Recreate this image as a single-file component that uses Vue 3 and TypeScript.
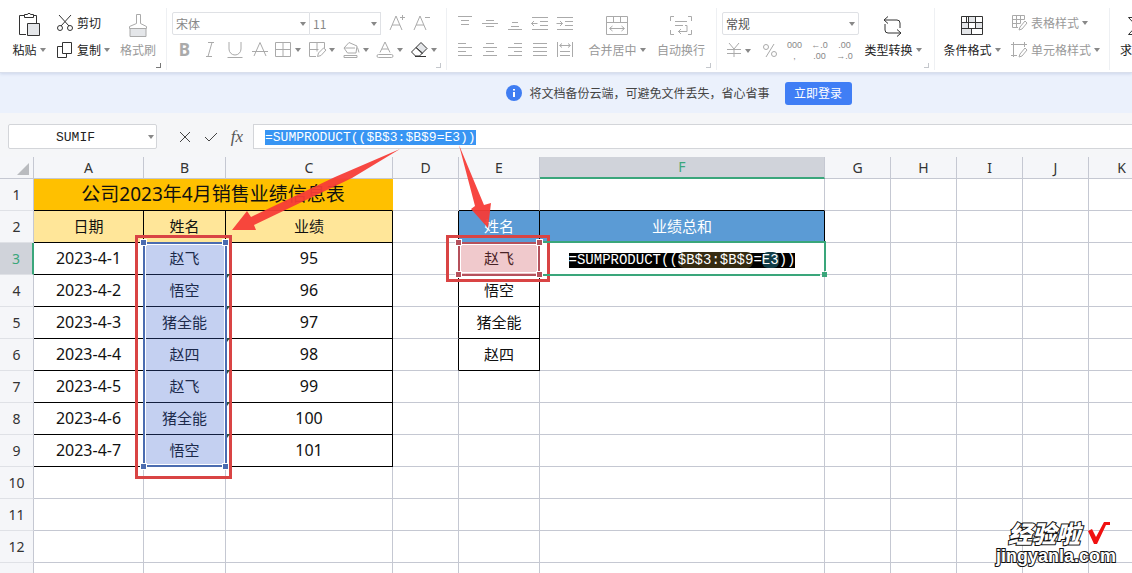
<script setup lang="ts">
import { onMounted, ref } from 'vue'

interface Tool {
  name: string
  d: string
}

interface Cell {
  col: string
  text: string
  cls: string
  span?: number
}

const formulaText = ref('=SUMPRODUCT(($B$3:$B$9=E3))')
const cellName = ref('SUMIF')
const formulaInput = ref<HTMLInputElement | null>(null)

const textTools: Tool[] = [
  { name: '下划线', d: 'M5 3v7a6 6 0 0 0 12 0V3M3.500 18.500h15' },
  { name: '删除线', d: 'M5 17L11 3.500L17 17M3 12.500h16' },
]

const dropTools: Tool[] = [
  { name: '边框', d: 'M3.500 3.500h15v14h-15zM11 3.500v14M3.500 10.500h15' },
  { name: '绘图边框', d: 'M10 17.500H3.500v-14h15v6M3.500 10.500h9M11 3.500v9M11.500 17.500l1-3.500l5-5l2.500 2l-5 5.500z' },
  { name: '填充颜色', d: 'M9 3.500l8 3.500l-1 7H7.500L4 9zM4 9h11M17.500 8.500l1.500 5M4 16.500h13v2h-13z' },
  { name: '字体颜色', d: 'M6 13.500L11 3l5 10.500M8 10h6M4.500 15.500h13a1.500 1.500 0 0 1 0 3h-13a1.500 1.500 0 0 1 0-3z' },
]

const alignTop: Tool[] = [
  { name: '顶端对齐', d: 'M4 4.500h14M7 8.500h8M7 12.500h8' },
  { name: '垂直居中', d: 'M7 8.500h8M3 11.500h16M7 14.500h8' },
  { name: '底端对齐', d: 'M8 10.500h6M7 14.500h8M4 17.500h14' },
  { name: '减少缩进', d: 'M3 5.500h16M11 9.500h8M11 13.500h8M3 17.500h16M2.500 11.500h6M5 9l-2.500 2.500l2.500 2.500' },
  { name: '增加缩进', d: 'M3 5.500h16M11 9.500h8M11 13.500h8M3 17.500h16M2.500 11.500h6M6 9l2.500 2.500l-2.500 2.500' },
]

const alignBottom: Tool[] = [
  { name: '左对齐', d: 'M4 4.500h8M4 8.500h14M4 12.500h8M4 16.500h14' },
  { name: '水平居中', d: 'M7 4.500h8M4 8.500h14M7 12.500h8M4 16.500h14' },
  { name: '右对齐', d: 'M10 4.500h8M4 8.500h14M10 12.500h8M4 16.500h14' },
  { name: '两端对齐', d: 'M4 4.500h14M4 8.500h14M4 12.500h14M4 16.500h14' },
  { name: '分散对齐', d: 'M3.500 3v15M18.500 3v15M6 6.500h10M8 4.500l-2.500 2l2.500 2M14 4.500l2.500 2l-2.500 2M6 12.500h10M6 16.500h10' },
]

const columns = ['A', 'B', 'C', 'D', 'E', 'F', 'G', 'H', 'I', 'J', 'K']
const dates = ['2023-4-1', '2023-4-2', '2023-4-3', '2023-4-4', '2023-4-5', '2023-4-6', '2023-4-7']
const names = ['赵飞', '悟空', '猪全能', '赵四', '赵飞', '猪全能', '悟空']
const scores = ['95', '96', '97', '98', '99', '100', '101']
const lookups = ['赵飞', '悟空', '猪全能', '赵四']
const labelledRows = 12

function cellsFor(row: number): Cell[] {
  const out: Cell[] = []
  for (const col of columns) {
    if (row === 1) {
      if (col === 'A') out.push({ col, text: '公司2023年4月销售业绩信息表', cls: 'title', span: 3 })
      else if (col === 'B' || col === 'C') continue
      else out.push({ col, text: '', cls: col === 'E' || col === 'F' ? 'under' : '' })
      continue
    }
    const i = row - 3
    let text = ''
    let cls = ''
    if (row === 2) {
      if (col === 'A') [text, cls] = ['日期', 'head box']
      if (col === 'B') [text, cls] = ['姓名', 'head box']
      if (col === 'C') [text, cls] = ['业绩', 'head box']
      if (col === 'D') cls = 'side'
      if (col === 'E') [text, cls] = ['姓名', 'blue box']
      if (col === 'F') [text, cls] = ['业绩总和', 'blue box']
    } else if (row <= 9) {
      if (col === 'A') [text, cls] = [dates[i], 'box num']
      if (col === 'B') [text, cls] = [names[i], 'box']
      if (col === 'C') [text, cls] = [scores[i], 'box num']
      if (row <= 6) {
        if (col === 'D') cls = 'side'
        if (col === 'E') [text, cls] = [lookups[i], 'box']
      }
      if (row === 3 && col === 'F') cls = 'editing'
    }
    out.push({ col, text, cls })
  }
  return out
}

const rows = Array.from({ length: labelledRows + 1 }, (_, i) => ({
  n: i + 1,
  label: i < labelledRows ? String(i + 1) : '',
  cells: cellsFor(i + 1),
}))

onMounted(() => {
  formulaInput.value?.focus()
  formulaInput.value?.select()
})
</script>

<template>
  <div class="app">
    <header class="ribbon">
      <section class="group clipboard">
        <button class="big dark paste">
          <span class="pic">
            <svg width="24" height="26" viewBox="0 0 24 26">
              <path d="M7 3.500H2.500v19H9M16 3.500h3.500V11" />
              <path d="M7.500 5.500v-3h3l.500-1h2l.500 1h3v3z" />
              <path class="shade" d="M10.500 11.500h12v12h-12z" />
            </svg>
          </span>
          <span class="cap">粘贴<i class="caret"></i></span>
        </button>
        <div class="stack">
          <button class="small dark">
            <svg width="18" height="18" viewBox="0 0 18 18">
              <path d="M3 1l10 11M15 1L5 12" />
              <circle cx="4" cy="14" r="2.500" /><circle cx="14" cy="14" r="2.500" />
            </svg>剪切
          </button>
          <button class="small dark">
            <svg width="18" height="18" viewBox="0 0 18 18">
              <path d="M6.500 1.500h9v11h-9zM6 5.500H1.500v11h9v-3.500" />
            </svg>复制<i class="caret"></i>
          </button>
        </div>
        <button class="big brush">
          <span class="pic">
            <svg width="24" height="26" viewBox="0 0 24 26">
              <path d="M10.500 2.500h4v9l6 3v2h-17v-2l7-3z" />
              <path class="shade" d="M4 16.500h16v8H4z" />
            </svg>
          </span>
          <span class="cap">格式刷</span>
        </button>
        <i class="corner strong"></i>
      </section>

      <section class="group font">
        <div class="line">
          <span class="pick family"><select aria-label="字体"><option>宋体</option></select><i class="caret"></i></span>
          <span class="pick size"><select aria-label="字号"><option>11</option></select><i class="caret"></i></span>
          <button class="tool grow" aria-label="增大字号">
            <svg width="22" height="22" viewBox="0 0 22 22"><path d="M3 18L9 4L15 18M5 13h8M13 5.500h5M15.500 3v5" /></svg>
          </button>
          <button class="tool" aria-label="减小字号">
            <svg width="22" height="22" viewBox="0 0 22 22"><path d="M2 18L8 4L14 18M4 13h8M13 5.500h5" /></svg>
          </button>
        </div>
        <div class="line">
          <button class="tool bold" aria-label="加粗">B</button>
          <button class="tool italic" aria-label="倾斜">
            <svg width="22" height="22" viewBox="0 0 22 22"><path d="M9 3.500h6M7 17.500h6M13 3.500l-4 14" /></svg>
          </button>
          <button v-for="t in textTools" :key="t.name" class="tool" :aria-label="t.name">
            <svg width="22" height="22" viewBox="0 0 22 22"><path :d="t.d" /></svg>
          </button>
          <button v-for="t in dropTools" :key="t.name" class="tool drop" :aria-label="t.name">
            <svg width="22" height="22" viewBox="0 0 22 22"><path :d="t.d" /></svg><i class="caret"></i>
          </button>
          <button class="tool drop dark" aria-label="清除">
            <svg width="22" height="22" viewBox="0 0 22 22">
              <path class="shade" d="M8 8.500l5-5l6 6l-5 5z" />
              <path d="M8 8.500l-4.500 4.500l4 4h4l3-3zM7 17.500h11" />
            </svg><i class="caret"></i>
          </button>
        </div>
        <i class="corner"></i>
      </section>

      <section class="group align">
        <div class="stack">
          <div class="line">
            <button v-for="t in alignTop" :key="t.name" class="tool" :aria-label="t.name">
              <svg width="22" height="22" viewBox="0 0 22 22"><path :d="t.d" /></svg>
            </button>
          </div>
          <div class="line">
            <button v-for="t in alignBottom" :key="t.name" class="tool" :aria-label="t.name">
              <svg width="22" height="22" viewBox="0 0 22 22"><path :d="t.d" /></svg>
            </button>
          </div>
        </div>
        <button class="big merge">
          <span class="pic">
            <svg width="24" height="26" viewBox="0 0 24 26">
              <path d="M1.500 4.500h21v18h-21zM1.500 10.500h21M8.500 4.500v6M15.500 4.500v6M5 16.500h14M7.500 14l-3 2.500l3 2.500M16.500 14l3 2.500l-3 2.500" />
            </svg>
          </span>
          <span class="cap">合并居中<i class="caret"></i></span>
        </button>
        <button class="big">
          <span class="pic">
            <svg width="24" height="26" viewBox="0 0 24 26">
              <path d="M5 4.500H1.500V9M19 4.500h3.500V9M5 22.500H1.500V18M19 22.500h3.500V18M6 9.500h12M6 13.500h8M16 13.500h2v6H9M12 17l-2.500 2.500l2.500 2.500" />
            </svg>
          </span>
          <span class="cap">自动换行</span>
        </button>
        <i class="corner"></i>
      </section>

      <section class="group number">
        <div class="stack">
          <span class="pick format"><select aria-label="数字格式"><option>常规</option></select><i class="caret"></i></span>
          <div class="line spread">
            <button class="tool drop" aria-label="货币">
              <svg width="22" height="22" viewBox="0 0 22 22"><path d="M7 3l5 6l5-6M12 9v8M5 9.500h14M5 13.500h14" /></svg><i class="caret"></i>
            </button>
            <button class="tool" aria-label="百分比">
              <svg width="22" height="22" viewBox="0 0 22 22"><path d="M15 4L7 17" /><circle cx="7" cy="7" r="2.500" /><circle cx="15" cy="14" r="2.500" /></svg>
            </button>
            <button class="tool digits"><span>000</span><span>,</span></button>
            <button class="tool digits"><span>←.0</span><span>.00</span></button>
            <button class="tool digits"><span>.00</span><span>→.0</span></button>
          </div>
        </div>
        <button class="big dark">
          <span class="pic">
            <svg width="24" height="26" viewBox="0 0 24 26">
              <path d="M7 4.500l-4 3.500l4 3.500M3 8h13a3 3 0 0 1 3 3v5M4 12v6a3 3 0 0 0 3 3h13M16 17.500l4 3.500l-4 3.500" />
            </svg>
          </span>
          <span class="cap">类型转换<i class="caret"></i></span>
        </button>
        <i class="corner"></i>
      </section>

      <section class="group styles">
        <button class="big dark">
          <span class="pic">
            <svg width="24" height="26" viewBox="0 0 24 26">
              <path class="shade" d="M1.500 10.500h7v6h-7zM8.500 4.500h7v6h-7zM15.500 10.500h7v6h-7zM1.500 16.500h10v6h-10z" />
              <path d="M1.500 4.500h21v18h-21zM1.500 10.500h21M1.500 16.500h21M6.500 4.500v6M15.500 4.500v6M8.500 10.500v6M11.500 16.500v6" />
            </svg>
          </span>
          <span class="cap">条件格式<i class="caret"></i></span>
        </button>
        <div class="stack">
          <button class="small">
            <svg width="18" height="18" viewBox="0 0 18 18">
              <path d="M8 13.500H2.500v-12h12v4M2.500 5.500h12M2.500 9.500h8M6.500 1.500v12M10.500 1.500v8M9 16l1-3l5-6l2 2l-5 6z" />
            </svg>表格样式<i class="caret"></i>
          </button>
          <button class="small">
            <svg width="18" height="18" viewBox="0 0 18 18">
              <path d="M1 3.500h16M3.500 1v15M14.500 1v5M1 14.500h6M9 16l1-3l5-6l2 2l-5 6z" />
            </svg>单元格样式<i class="caret"></i>
          </button>
        </div>
      </section>

      <section class="group sum">
        <button class="big dark">
          <span class="pic">
            <svg width="24" height="26" viewBox="0 0 24 26"><path d="M20 8V5.500H3.500l8 8.500l-8 8.500H20V20" /></svg>
          </span>
          <span class="cap">求和<i class="caret"></i></span>
        </button>
      </section>
    </header>

    <div class="notice">
      <svg width="16" height="16" viewBox="0 0 16 16">
        <circle cx="8" cy="8" r="8" /><path d="M8 7v5M8 4v1.500" />
      </svg>
      <span>将文档备份云端，可避免文件丢失，省心省事</span>
      <button>立即登录</button>
    </div>

    <div class="formula-bar">
      <span class="name-box"><input v-model="cellName" aria-label="名称框"><i class="caret"></i></span>
      <button aria-label="取消"><svg width="14" height="14" viewBox="0 0 14 14"><path d="M2 2l10 10M12 2L2 12" /></svg></button>
      <button aria-label="输入"><svg width="14" height="14" viewBox="0 0 14 14"><path d="M1 7l4 4l8-8" /></svg></button>
      <button class="fx">fx</button>
      <input ref="formulaInput" v-model="formulaText" class="formula" aria-label="编辑栏" spellcheck="false">
    </div>

    <main class="sheet">
      <table>
        <colgroup>
          <col class="w-n">
          <col v-for="c in columns" :key="c" :class="'w-' + c">
        </colgroup>
        <thead>
          <tr>
            <th class="all"><svg width="12" height="12" viewBox="0 0 12 12"><path d="M12 0v12H0z" /></svg></th>
            <th v-for="c in columns" :key="c" :class="{ current: c === 'F' }">{{ c }}</th>
          </tr>
        </thead>
        <tbody>
          <tr v-for="r in rows" :key="r.n">
            <th :class="{ current: r.n === 3 }">{{ r.label }}</th>
            <td v-for="c in r.cells" :key="c.col" :class="c.cls" :colspan="c.span ?? 1">
              <span v-if="c.cls === 'editing'" class="edit">=SUMPRODUCT((<b class="gold">$B$3:$B$9</b>=<b class="teal">E3</b>))</span>
              <template v-else>{{ c.text }}</template>
            </td>
          </tr>
        </tbody>
      </table>
    </main>

    <svg class="marks" width="840" height="490" viewBox="0 0 840 490" aria-hidden="true">
      <g class="range blue-range">
        <rect class="fill" x="144" y="243" width="82" height="224" />
        <rect class="inner" x="145.500" y="244.500" width="79" height="220" />
        <rect class="edge" x="144" y="243" width="82" height="223" />
        <rect class="dot" x="140.500" y="239.500" width="6" height="6" />
        <rect class="dot" x="222.500" y="239.500" width="6" height="6" />
        <rect class="dot" x="140.500" y="463.500" width="6" height="6" />
        <rect class="dot" x="222.500" y="463.500" width="6" height="6" />
      </g>
      <g class="range pink-range">
        <rect class="fill" x="459" y="243" width="81" height="32" />
        <rect class="inner" x="460.500" y="244.500" width="77" height="28" />
        <rect class="edge" x="459" y="243" width="80" height="32" />
        <rect class="dot" x="455.500" y="239.500" width="6" height="6" />
        <rect class="dot" x="536.500" y="239.500" width="6" height="6" />
        <rect class="dot" x="455.500" y="271.500" width="6" height="6" />
        <rect class="dot" x="536.500" y="271.500" width="6" height="6" />
      </g>
      <rect class="red" x="136.500" y="236.500" width="94" height="241" />
      <rect class="red" x="447.500" y="236.500" width="101" height="44" />
      <path class="green" d="M543 242h282v29M820 275H543" />
      <rect class="green-dot" x="822" y="272" width="5" height="5" />
      <path class="tick" d="M227 274h3l-3 4zM227 306h3l-3 4zM227 338h3l-3 4zM227 370h3l-3 4zM227 402h3l-3 4zM227 434h3l-3 4z" />
      <path class="arrow" d="M400 149L335 177L251 217L247 211L232 230L256 230L254 225L352 178z" />
      <path class="arrow" d="M459 145L475 206L471 209L488 228L491 203L484 205z" />
    </svg>

    <div class="watermark">
      <div class="brand">
        <span>经验啦</span>
        <svg width="26" height="26" viewBox="0 0 26 26"><path d="M2 11l4-2l4 8L18 2h6v3h-4L11 24H8z" /></svg>
      </div>
      <div class="site">jingyanla.com</div>
    </div>
  </div>
</template>

<style>
body {
  overflow: hidden;
}
</style>

<style scoped>
.app {
  position: relative;
  display: flex;
  flex-direction: column;
  height: 100vh;
  overflow: hidden;
  background: #fff;
  color: #222;
  font: 12px/16px "Noto Sans", "Noto Sans CJK SC", sans-serif;
}
button,
input,
select {
  margin: 0;
  padding: 0;
  border: 0;
  background: none;
  color: inherit;
  font: inherit;
  outline: 0;
  box-sizing: border-box;
}
.caret {
  flex: none;
  width: 0;
  height: 0;
  border: 3px solid transparent;
  border-top: 4px solid #888;
  border-bottom: 0;
}
.ribbon {
  display: flex;
  flex: none;
  height: 73px;
  box-sizing: border-box;
  border-bottom: 1px solid #d9dfec;
  box-shadow: 0 1px 3px #ccd6ea;
  overflow: hidden;
  color: #999;
  font-family: "Noto Sans CJK SC", sans-serif;
  z-index: 1;
}
.ribbon svg {
  flex: none;
  fill: none;
  stroke: #aaa;
  stroke-width: 1;
}
.ribbon .dark {
  color: #222;
}
.ribbon .dark svg {
  stroke: #333;
}
.ribbon .shade {
  fill: #e4e6e9;
}
.group {
  position: relative;
  flex: none;
  display: flex;
  padding-top: 12px;
  box-sizing: border-box;
}
.group + .group::before {
  content: "";
  position: absolute;
  left: 0;
  top: 8px;
  width: 1px;
  height: 62px;
  background: #eef0f3;
}
.clipboard { width: 166px; padding-left: 8px; }
.font { width: 280px; padding-left: 6px; flex-direction: column; gap: 5px; }
.align { width: 270px; padding-left: 6px; }
.number { width: 218px; padding-left: 6px; }
.styles { width: 175px; padding-left: 6px; }
.sum { padding-left: 5px; }
.stack {
  display: flex;
  flex-direction: column;
  gap: 5px;
}
.line {
  display: flex;
  height: 22px;
}
.big {
  display: flex;
  flex-direction: column;
  align-items: center;
  flex: none;
  width: 64px;
  height: 49px;
}
.paste { width: 42px; }
.brush { width: 44px; margin-left: 6px; }
.merge { margin-left: 8px; }
.number .big { margin-left: 2px; }
.sum .big { width: 45px; }
.pic {
  display: flex;
  height: 27px;
}
.cap {
  display: flex;
  align-items: center;
  gap: 3px;
  height: 22px;
  white-space: nowrap;
}
.small {
  display: flex;
  align-items: center;
  gap: 3px;
  height: 22px;
  white-space: nowrap;
}
.clipboard .stack { padding-left: 6px; }
.styles .stack { padding-left: 6px; }
.tool {
  display: flex;
  align-items: center;
  justify-content: center;
  width: 25px;
  height: 22px;
}
.tool.drop {
  justify-content: flex-start;
  width: 34px;
  gap: 3px;
}
.drop svg { margin-right: -2px; }
.tool.grow { margin-left: 4px; }
.bold {
  color: #aaa;
  font: bold 17px/22px "Noto Sans", sans-serif;
}
.digits {
  flex-direction: column;
  color: #888;
  font: 9px/11px "Liberation Sans", sans-serif;
}
.digits span { height: 11px; }
.spread .drop { width: 35px; }
.pick {
  position: relative;
  display: flex;
  height: 23px;
  box-sizing: border-box;
  border: 1px solid #dfe1e5;
}
.pick select {
  width: 100%;
  padding: 0 3px;
  appearance: none;
  color: #888;
}
.pick .caret {
  position: absolute;
  right: 3px;
  top: 9px;
}
.family { width: 138px; border-radius: 2px 0 0 2px; }
.size { width: 71px; border-left: 0; }
.format { width: 137px; border-radius: 2px; }
.format select { color: #555; }
.corner {
  position: absolute;
  right: 5px;
  bottom: 4px;
  width: 4px;
  height: 4px;
  border: solid #c4c7cc;
  border-width: 0 1px 1px 0;
}
.corner.strong { border-color: #777; }

.notice {
  display: flex;
  align-items: center;
  justify-content: center;
  flex: none;
  height: 40px;
  padding-left: 226px;
  background: #ebf1fc;
  color: #444;
  font-family: "Noto Sans CJK SC", sans-serif;
}
.notice svg {
  margin-right: 7px;
  fill: #3f7df2;
}
.notice path {
  stroke: #fff;
  stroke-width: 2;
}
.notice button {
  width: 67px;
  height: 23px;
  margin-left: 15px;
  border-radius: 3px;
  background: #407ef5;
  color: #fff;
}

.formula-bar {
  display: flex;
  align-items: center;
  flex: none;
  height: 44px;
  padding: 3px 0 0 8px;
  box-sizing: border-box;
  background: #f5f6f8;
}
.formula-bar svg {
  fill: none;
  stroke: #444;
}
.name-box {
  position: relative;
  width: 149px;
  height: 25px;
  margin-right: 15px;
}
.name-box input {
  width: 100%;
  height: 100%;
  padding: 2px 14px 0 0;
  border: 1px solid #d3d5d9;
  border-radius: 2px;
  background: #fff;
  text-align: center;
  font: 13px/18px "Liberation Mono", monospace;
}
.name-box .caret {
  position: absolute;
  right: 3px;
  top: 11px;
}
.formula-bar button {
  display: flex;
  align-items: center;
  justify-content: center;
  width: 26px;
  height: 24px;
}
.formula-bar .fx {
  margin-right: 3px;
  color: #555;
  font: italic 17px/20px "Liberation Serif", serif;
}
.formula-bar .formula {
  flex: 1;
  min-width: 0;
  height: 25px;
  padding: 1px 0 0 11px;
  border: 1px solid #d3d5d9;
  border-right: 0;
  background: #fff;
  font: 13px/18px "Liberation Mono", monospace;
}
.formula::selection {
  background: #3895f3;
  color: #fff;
}

.sheet {
  flex: 1;
  min-height: 0;
  overflow: hidden;
}
table {
  width: 1155px;
  table-layout: fixed;
  border-collapse: separate;
  border-spacing: 0;
}
.w-n { width: 34px; }
.w-A { width: 110px; }
.w-B { width: 82px; }
.w-C { width: 167px; }
.w-D { width: 66px; }
.w-E { width: 81px; }
.w-F { width: 285px; }
.w-G, .w-H, .w-I, .w-J, .w-K { width: 66px; }
th,
td {
  height: 32px;
  padding: 0;
  box-sizing: border-box;
  border: solid #c5c8d2;
  border-width: 0 1px 1px 0;
  text-align: center;
  vertical-align: middle;
  white-space: nowrap;
}
th {
  background: #f5f6f9;
  color: #333;
  font: 14px/20px "Noto Sans", sans-serif;
}
tbody th { border-bottom-color: #dfe1e6; }
thead th {
  height: 22px;
}
thead .current {
  border-bottom: 2px solid #3aa67b;
}
tbody .current {
  border-right: 2px solid #3aa67b;
}
.current {
  background: #d0d3da;
  color: #3aa67b;
}
.all {
  padding-right: 4px;
  text-align: right;
}
.all svg {
  display: inline-block;
  fill: #b9bbbf;
  vertical-align: middle;
}
td {
  padding-bottom: 2px;
  color: #111;
  font: 15px/22px "Noto Sans", "Noto Sans CJK SC", sans-serif;
}
.num { font-size: 16px; }
.title {
  border-bottom-color: #000;
  border-right-color: #ffc000;
  background: #ffc000;
  font-size: 19px;
}
.under { border-bottom-color: #000; }
.side { border-right-color: #000; }
.box { border-color: #000; }
.head { background: #ffe699; }
.blue {
  background: #5b9bd5;
  color: #fff;
}
.editing { padding-bottom: 0; }
.edit {
  display: inline-block;
  background: #000;
  color: #fff;
  font: 14px/15px "Liberation Mono", monospace;
  vertical-align: middle;
}
.edit b {
  border-radius: 6px;
  font-weight: normal;
}
.gold { background: #352b12; }
.teal { background: #123e48; }

.marks {
  position: absolute;
  left: 0;
  top: 0;
  z-index: 2;
  pointer-events: none;
}
.red {
  fill: none;
  stroke: #d94444;
  stroke-width: 3;
}
.inner {
  fill: none;
  stroke: #fff;
  stroke-width: 1;
}
.edge {
  fill: none;
  stroke-width: 2;
}
.dot {
  stroke: #fff;
  stroke-width: 1;
}
.blue-range .fill { fill: rgba(60, 100, 210, 0.3); }
.blue-range .edge { stroke: #4b6cb0; }
.blue-range .dot { fill: #4b6cb0; }
.pink-range .fill { fill: rgba(206, 75, 85, 0.3); }
.pink-range .edge { stroke: #b5505b; }
.pink-range .dot { fill: #b5505b; }
.green {
  fill: none;
  stroke: #3aa67b;
  stroke-width: 2;
}
.green-dot { fill: #3aa67b; }
.tick { fill: #2c4a3c; }
.arrow {
  fill: #f73c36;
  opacity: 0.94;
}

.watermark {
  position: absolute;
  right: 16px;
  bottom: 6px;
  z-index: 3;
  color: #fff;
  paint-order: stroke fill;
  -webkit-text-stroke: 2px #111;
}
.brand {
  display: flex;
  align-items: center;
  justify-content: flex-end;
  gap: 6px;
  height: 26px;
  padding-right: 4px;
  font: italic 900 24px/26px "Noto Sans CJK SC", sans-serif;
}
.brand svg {
  fill: #f01010;
}
.site {
  text-align: right;
  font: bold 18px/21px "Liberation Sans", sans-serif;
}
</style>
